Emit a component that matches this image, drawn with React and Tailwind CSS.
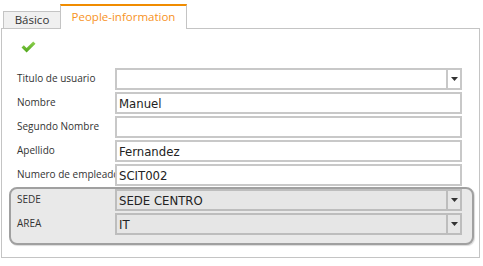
import { useState } from 'react';

const fields = [
  { label: 'Titulo de usuario', value: '', select: true },
  { label: 'Nombre', value: 'Manuel' },
  { label: 'Segundo Nombre', value: '' },
  { label: 'Apellido', value: 'Fernandez' },
  { label: 'Numero de empleado', value: 'SCIT002' },
];

const grouped = [
  { label: 'SEDE', value: 'SEDE CENTRO' },
  { label: 'AREA', value: 'IT' },
];

const Caret = () => (
  <svg width="7" height="4" viewBox="0 0 7 4" className="block">
    <path d="M0 0h7L3.5 4z" fill="#333" />
  </svg>
);

const Field = ({ label, value, select, gray }) => (
  <div className="flex h-[22px] items-center">
    <label className="w-[98px] shrink-0 -mt-[3px] text-[10px] leading-none text-[#333] whitespace-nowrap" style={{ fontFamily: '"Open Sans", sans-serif' }}>
      {label}
    </label>
    <div className={`flex h-[22px] w-[347px] items-center border-2 ${gray ? 'bg-[#e6e6e6] border-[#bdbdbd]' : 'bg-white border-[#c8c8c8]'}`}>
      <span className="flex-1 pl-[2px] text-[13px] leading-none text-[#222]" style={{ fontFamily: '"DejaVu Sans Condensed", "DejaVu Sans", sans-serif' }}>{value}</span>
      {select && (
        <span className={`flex h-full w-[14px] items-center justify-center border-l-2 ${gray ? 'border-[#bdbdbd]' : 'border-[#c8c8c8]'}`}>
          <Caret />
        </span>
      )}
    </div>
  </div>
);

export default function App() {
  const [tab, setTab] = useState('people');

  return (
    <div className="h-[266px] w-[483px] bg-white pl-[1px] pt-[4px]" style={{ fontFamily: '"DejaVu Sans", Verdana, sans-serif' }}>
      <div className="flex h-[24px] items-end pl-[2px]" style={{ fontFamily: '"Open Sans", sans-serif' }}>
        <button
          onClick={() => setTab('basic')}
          className="flex h-[17px] w-[58px] items-center justify-center border border-b-0 border-[#c4c4c4] bg-[#f0f0f0] text-[11.5px] leading-none text-[#333]"
        >
          Básico
        </button>
        <button
          onClick={() => setTab('people')}
          className="relative z-10 -mb-[1px] -ml-[1px] flex h-[25px] w-[127px] items-center justify-center border-x border-[#c4c4c4] border-t-2 border-t-[#f08c00] bg-white pb-[1px] text-[11.5px] leading-none text-[#f7931e]"
        >
          People-information
        </button>
      </div>
      <div className="h-[230px] w-[479px] border border-[#c4c4c4] px-[15px]">
        <div className="h-[39px] pl-[4px] pt-[12px]">
          <svg width="15" height="12" viewBox="0 0 15 12">
            <defs>
              <linearGradient id="ok" x1="0" y1="0" x2="0" y2="1">
                <stop offset="0" stopColor="#8fd14f" />
                <stop offset="1" stopColor="#4fa61a" />
              </linearGradient>
            </defs>
            <path d="M0.5 6.5 L2.8 4.3 L5.6 7.1 L12.2 0.5 L14.5 2.8 L5.6 11.6 Z" fill="url(#ok)" />
          </svg>
        </div>
        <div className="flex flex-col gap-[2px]">
          {fields.map((f) => (
            <Field key={f.label} {...f} />
          ))}
        </div>
        <div className="-ml-[8px] -mr-[10px] mt-[1px] flex flex-col gap-[2px] rounded-[8px] border-2 border-[#a0a0a0] bg-[#e9e9e9] pb-[8px] pl-[6px] pt-0 shadow-[1px_1px_1px_rgba(0,0,0,0.15)]">
          {grouped.map((f) => (
            <Field key={f.label} {...f} select gray />
          ))}
        </div>
      </div>
    </div>
  );
}
